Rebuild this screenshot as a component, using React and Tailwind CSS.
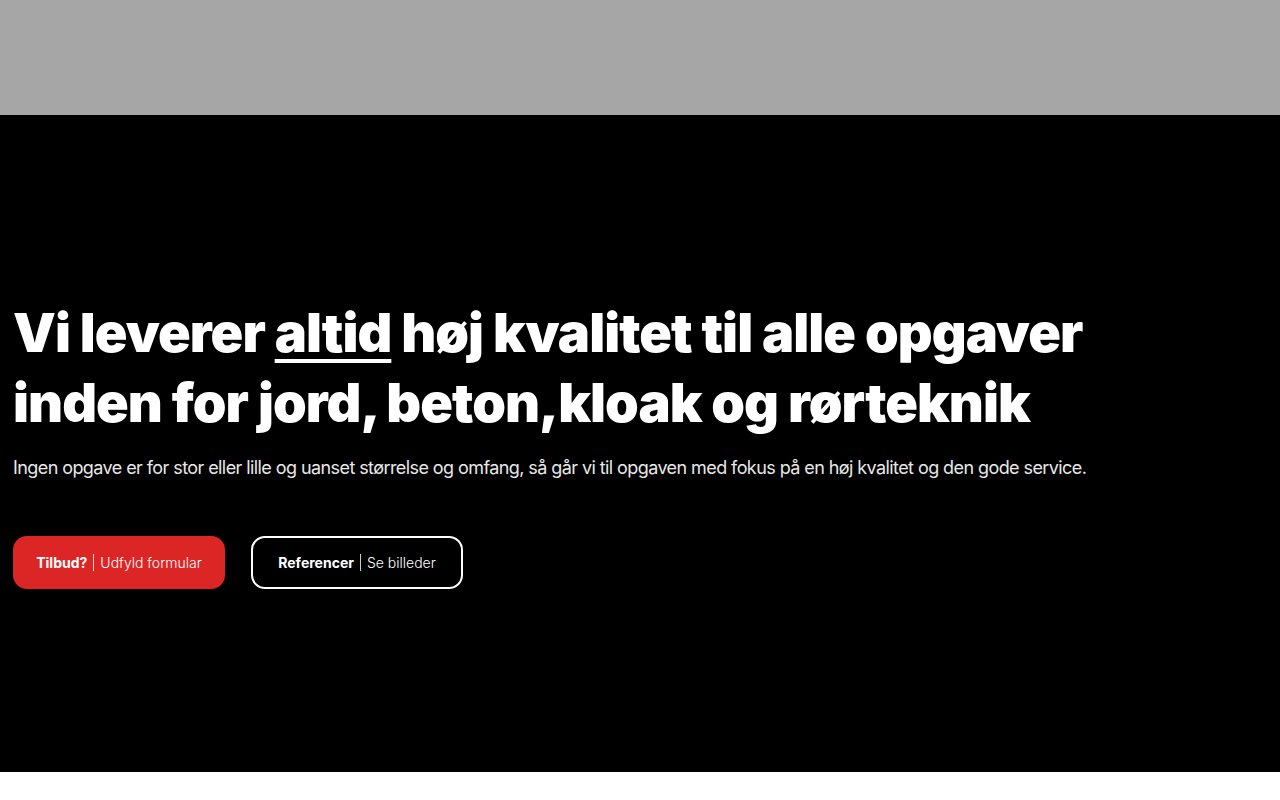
import React from 'react';

const App = () => {
  return (
    <div className="min-h-[800px] bg-white" style={{ fontFamily: 'Inter, "Noto Sans", sans-serif' }}>
      {/* Top bar */}
      <div className="h-[115px] bg-[#a6a6a6]" />

      {/* Hero */}
      <section className="h-[657px] bg-black flex items-center">
        <div className="px-[13px] w-full">
          <h1 className="max-w-[1150px] text-white font-black text-[54px] leading-[70px] tracking-[-0.95px]">
            Vi leverer <span className="underline decoration-[4px] underline-offset-[7px]">altid</span> høj kvalitet til alle opgaver inden for jord, beton,kloak og rørteknik
          </h1>
          <p className="mt-[16px] text-[18px] leading-[28px] tracking-[-0.58px] text-[#e8e8e8]">
            Ingen opgave er for stor eller lille og uanset størrelse og omfang, så går vi til opgaven med fokus på en høj kvalitet og den gode service.
          </p>
          <div className="mt-[54px] flex gap-[26px]">
            <a href="#" className="w-[212px] h-[53px] rounded-[14px] bg-[#dc2626] text-white text-[14px] flex items-center justify-center">
              <span className="font-bold">Tilbud?</span>
              <span className="mx-[6px] h-[17px] w-px bg-white/80" />
              <span className="font-light">Udfyld formular</span>
            </a>
            <a href="#" className="w-[212px] h-[53px] rounded-[14px] border-2 border-white text-white text-[14px] flex items-center justify-center">
              <span className="font-bold">Referencer</span>
              <span className="mx-[6px] h-[17px] w-px bg-white/80" />
              <span className="font-light">Se billeder</span>
            </a>
          </div>
        </div>
      </section>
    </div>
  );
};

export default App;
